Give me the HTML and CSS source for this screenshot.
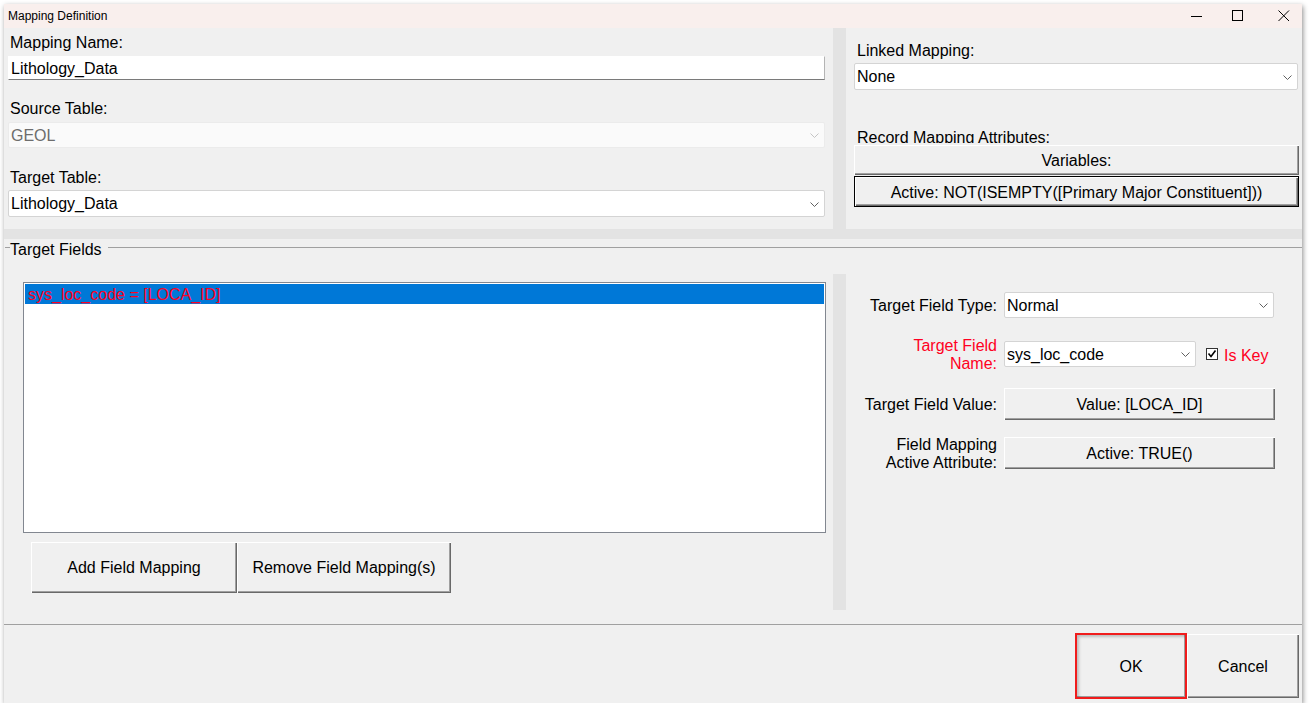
FILE: index.html
```html
<!DOCTYPE html>
<html>
<head>
<meta charset="utf-8">
<title>Mapping Definition</title>
<link rel="stylesheet" href="styles.css">
</head>
<body>
<div class="window">
  <div class="titlebar">
    <div class="title">Mapping Definition</div>
    <svg class="wc wc-min" width="12" height="12" viewBox="0 0 12 12"><path d="M0 6.5H11" stroke="#000" stroke-width="1"/></svg>
    <svg class="wc wc-max" width="12" height="12" viewBox="0 0 12 12"><rect x="0.5" y="0.5" width="10" height="10" fill="none" stroke="#000" stroke-width="1"/></svg>
    <svg class="wc wc-close" width="12" height="12" viewBox="0 0 12 12"><path d="M0.5 0.5L11 11M11 0.5L0.5 11" stroke="#000" stroke-width="1"/></svg>
  </div>

  <div class="top">
    <div class="panel-left">
      <div class="label">Mapping Name:</div>
      <div class="textbox">Lithology_Data</div>
      <div class="label label-gap">Source Table:</div>
      <div class="combo combo-disabled combo-left">
        <span class="combo-text">GEOL</span>
        <svg class="chev" width="9" height="5" viewBox="0 0 9 5"><path d="M0.5 0.5L4.5 4.5L8.5 0.5" fill="none" stroke="#c4c4c4" stroke-width="1"/></svg>
      </div>
      <div class="label label-gap2">Target Table:</div>
      <div class="combo combo-left combo-tall">
        <span class="combo-text">Lithology_Data</span>
        <svg class="chev" width="9" height="5" viewBox="0 0 9 5"><path d="M0.5 0.5L4.5 4.5L8.5 0.5" fill="none" stroke="#606060" stroke-width="1"/></svg>
      </div>
    </div>
    <div class="vsplit"></div>
    <div class="panel-right">
      <div class="label label-r">Linked Mapping:</div>
      <div class="combo combo-right combo-tall">
        <span class="combo-text">None</span>
        <svg class="chev" width="9" height="5" viewBox="0 0 9 5"><path d="M0.5 0.5L4.5 4.5L8.5 0.5" fill="none" stroke="#606060" stroke-width="1"/></svg>
      </div>
      <div class="label label-r label-clip">Record Mapping Attributes:</div>
      <div class="btn btn-vars">Variables:</div>
      <div class="btn btn-default btn-active">Active: NOT(ISEMPTY([Primary Major Constituent]))</div>
    </div>
  </div>

  <div class="hsplit"></div>

  <div class="group-head">
    <div class="gline gline-tick"></div>
    <div class="legend">Target Fields</div>
    <div class="gline gline-fill"></div>
  </div>

  <div class="fields">
    <div class="fields-left">
      <div class="listbox">
        <div class="list-item selected"><span class="red-text">sys_loc_code = [LOCA_ID]</span></div>
      </div>
      <div class="btn-row">
        <div class="btn btn-add">Add Field Mapping</div>
        <div class="btn btn-remove">Remove Field Mapping(s)</div>
      </div>
    </div>
    <div class="vsplit"></div>
    <div class="fields-right">
      <div class="frow frow-1">
        <div class="flabel">Target Field Type:</div>
        <div class="combo fcombo">
          <span class="combo-text">Normal</span>
          <svg class="chev" width="9" height="5" viewBox="0 0 9 5"><path d="M0.5 0.5L4.5 4.5L8.5 0.5" fill="none" stroke="#606060" stroke-width="1"/></svg>
        </div>
      </div>
      <div class="frow frow-2">
        <div class="flabel red">Target Field<br>Name:</div>
        <div class="combo fcombo-short">
          <span class="combo-text">sys_loc_code</span>
          <svg class="chev" width="9" height="5" viewBox="0 0 9 5"><path d="M0.5 0.5L4.5 4.5L8.5 0.5" fill="none" stroke="#606060" stroke-width="1"/></svg>
        </div>
        <div class="checkbox">
          <svg width="10" height="10" viewBox="0 0 10 10"><path d="M1.5 4.5L4 7.5L8.5 1.5" fill="none" stroke="#000" stroke-width="1.6"/></svg>
        </div>
        <div class="iskey red">Is Key</div>
      </div>
      <div class="frow frow-3">
        <div class="flabel">Target Field Value:</div>
        <div class="btn fbtn">Value: [LOCA_ID]</div>
      </div>
      <div class="frow frow-4">
        <div class="flabel">Field Mapping<br>Active Attribute:</div>
        <div class="btn fbtn">Active: TRUE()</div>
      </div>
    </div>
  </div>

  <div class="footer">
    <div class="btn btn-ok">OK</div>
    <div class="btn btn-cancel">Cancel</div>
  </div>
</div>
</body>
</html>
```

FILE: styles.css
```css
* { box-sizing: border-box; }

body {
  margin: 0;
  background: #ffffff;
  font-family: "Liberation Sans", Arial, sans-serif;
  font-size: 16px;
  color: #000;
}

.window {
  margin: 4px 0 0 4px;
  width: 1298px;
  height: 699px;
  background: #f0f0f0;
  box-shadow: 1px 2px 5px rgba(0, 0, 0, 0.45);
  display: flex;
  flex-direction: column;
  overflow: hidden;
}

/* title bar */
.titlebar {
  height: 24px;
  flex: none;
  background: #f9efed;
  display: flex;
  align-items: center;
  padding-left: 4px;
  padding-bottom: 1px;
  font-size: 12px;
}
.title { flex: 1; }
.wc { flex: none; display: block; }
.wc-min { margin-right: 29px; }
.wc-max { margin-right: 34px; }
.wc-close { margin-right: 12px; }

/* top section */
.top {
  display: flex;
  height: 201px;
  flex: none;
}
.panel-left {
  width: 829px;
  padding-top: 5px;
}
.vsplit {
  width: 13px;
  flex: none;
  background: #e3e3e3;
}
.panel-right {
  flex: 1;
  padding-top: 13px;
}

.label {
  line-height: 20px;
  height: 18px;
  padding-left: 6px;
  white-space: nowrap;
}
.label-gap { margin-top: 19px; }
.label-gap2 { margin-top: 20px; }
.label-r { padding-left: 11px; }
.label-clip {
  margin-top: 39px;
  height: 14px;
  line-height: 18px;
  overflow: hidden;
}

.textbox {
  margin: 5px 0 0 4px;
  width: 817px;
  height: 24px;
  background: #fff;
  border: 1px solid #fff;
  border-right-color: #b4b4b4;
  border-bottom-color: #7a7a7a;
  line-height: 24px;
  padding-left: 2px;
}

.combo {
  display: flex;
  align-items: center;
  background: #fff;
  border: 1px solid #d4d4d4;
  border-radius: 2px;
  height: 26px;
  padding-left: 2px;
  padding-top: 1px;
}
.combo-text { flex: 1; white-space: nowrap; }
.chev { flex: none; display: block; margin-right: 5px; }
.combo-left { margin: 5px 0 0 4px; width: 817px; }
.combo-tall { height: 27px; margin-top: 4px; }
.combo-right { margin-left: 8px; width: 444px; }
.combo-disabled {
  background: #fafafa;
  border-color: #ebebeb;
  color: #6d6d6d;
}

/* classic buttons */
.btn {
  display: flex;
  align-items: center;
  justify-content: center;
  background: #f0f0f0;
  box-shadow: inset 1px 1px #ffffff, inset -1px -1px #696969, inset -2px -2px #a0a0a0;
  white-space: nowrap;
  padding-top: 1px;
}
.btn-default {
  border: 1px solid #000;
}
.btn-vars {
  margin: 2px 0 0 8px;
  width: 445px;
  height: 30px;
}
.btn-active {
  margin: 1px 0 0 8px;
  width: 445px;
  height: 31px;
  padding-top: 2px;
}

.hsplit {
  height: 10px;
  flex: none;
  background: #e3e3e3;
}

/* group header */
.group-head {
  height: 35px;
  flex: none;
  display: flex;
  align-items: flex-start;
}
.gline {
  margin-top: 8px;
  border-top: 1px solid #a0a0a0;
}
.gline-tick { width: 5px; margin-left: 1px; }
.legend {
  margin-top: 2px;
  line-height: 18px;
  padding: 0 6px 0 0;
}
.gline-fill { flex: 1; }

/* fields area */
.fields {
  display: flex;
  height: 336px;
  flex: none;
}
.fields-left {
  width: 829px;
  padding: 8px 0 0 19px;
}
.listbox {
  width: 803px;
  height: 251px;
  border: 1px solid #828790;
  background: #fff;
  padding: 1px;
}
.list-item {
  height: 20px;
  line-height: 22px;
  padding-left: 3px;
}
.list-item.selected { background: #0078d7; }
.red-text, .red { color: #ff0022; }

.btn-row {
  display: flex;
  margin: 9px 0 0 8px;
}
.btn-add { width: 206px; height: 51px; }
.btn-remove { width: 214px; height: 51px; }

.fields-right {
  flex: 1;
  padding-top: 18px;
}
.frow {
  display: flex;
  align-items: center;
}
.frow-1 { height: 26px; }
.frow-2 { height: 36px; margin-top: 18px; }
.frow-3 { height: 32px; margin-top: 16px; }
.frow-4 { height: 36px; margin-top: 15px; }
.flabel {
  width: 151px;
  margin-right: 7px;
  text-align: right;
  line-height: 18px;
  white-space: nowrap;
  padding-top: 2px;
}
.fcombo { width: 270px; }
.fcombo-short { width: 192px; height: 26px; }
.checkbox {
  width: 12px;
  height: 12px;
  margin-left: 10px;
  border: 1px solid #333;
  background: #fff;
  display: flex;
  align-items: center;
  justify-content: center;
}
.checkbox svg { display: block; }
.iskey { margin-left: 6px; line-height: 18px; margin-top: 3px; }
.fbtn { width: 271px; height: 32px; }

/* footer */
.footer {
  margin-top: 14px;
  border-top: 1px solid #a0a0a0;
  flex: 1;
  display: flex;
  justify-content: flex-end;
  align-items: flex-start;
  padding: 8px 3px 0 0;
}
.btn-ok {
  width: 112px;
  height: 66px;
  border: 2px solid #f01c1c;
  padding-top: 2px;
  box-shadow: inset 2px 2px 3px rgba(0, 0, 0, 0.22), inset -1px -1px #a0a0a0;
}
.btn-cancel {
  width: 112px;
  height: 64px;
  margin-top: 1px;
}
```
